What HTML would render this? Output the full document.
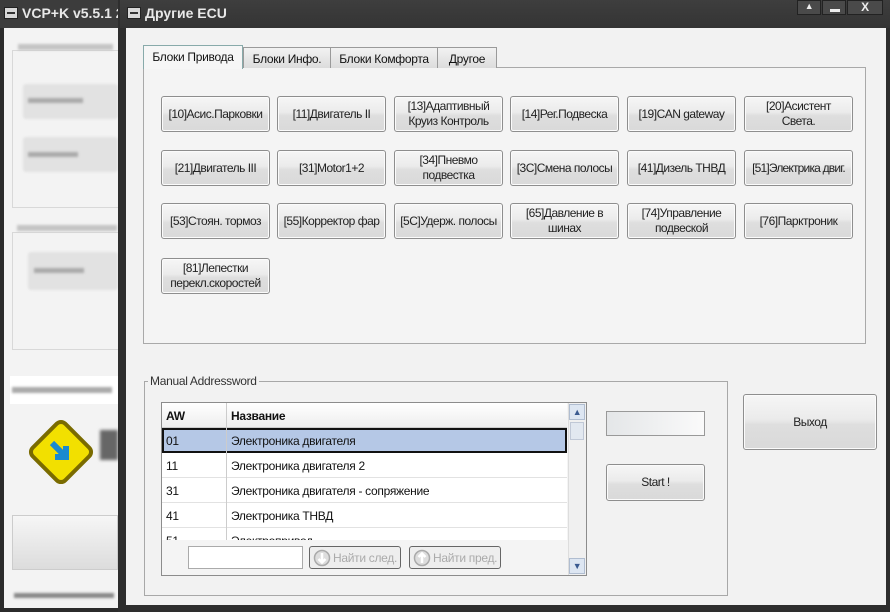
<!DOCTYPE html>
<html><head><meta charset="utf-8"><style>
*{box-sizing:border-box;margin:0;padding:0}
body{width:890px;height:612px;background:#2b2b2b;position:relative;overflow:hidden;font-family:"Liberation Sans",Arial,sans-serif;font-size:12px;color:#111;letter-spacing:-0.3px}
.a{position:absolute}
.title{color:#e8e8e8;font-weight:bold;font-size:14px;letter-spacing:0}
.sysbtn{background:#d8d8d8;border:1px solid #222;width:14px;height:12px}
.sysbtn:after{content:"";position:absolute;left:2px;top:4px;width:8px;height:2px;background:#333}
.btn{position:absolute;width:109px;height:36px;border:1px solid #8e8e8e;border-radius:3px;background:linear-gradient(#f6f6f6,#ebebeb 45%,#dedede 55%,#d9d9d9);display:flex;align-items:center;justify-content:center;text-align:center;font-size:12px;line-height:15px;color:#222;box-shadow:inset 0 0 0 1px #fbfbfb;white-space:nowrap;letter-spacing:-0.5px}
.tab{position:absolute;top:47px;height:21px;border:1px solid #9a9a9a;border-bottom:none;background:linear-gradient(#f2f2f2,#dcdcdc);font-size:12px;padding:4px 0 0;text-align:center}
.row{position:absolute;left:162px;width:405px;height:25px;border-bottom:1px solid #e2e2e2;background:#fff;font-size:12px}
.row span{position:absolute;top:6px}
.blur{background:#cfcfcf;filter:blur(1.2px)}
.sb{position:absolute;top:546px;width:92px;height:23px;border:1px solid #666;border-radius:3px;background:#eee;color:#aaa;font-size:12px;padding:4px 0 0 23px;white-space:nowrap}
.sb svg{position:absolute;left:3px;top:2px}
</style></head><body>
<!-- left window -->
<div class="a" style="left:0;top:0;width:118px;height:28px;background:#3c3c3c"></div>
<div class="a sysbtn" style="left:4px;top:7px"></div>
<div class="a title" style="left:22px;top:5px;white-space:nowrap">VCP+K v5.5.1 2</div>
<div class="a" style="left:4px;top:28px;width:114px;height:580px;background:#f3f3f3"></div>
<div class="a" style="left:12px;top:50px;width:106px;height:158px;border:1px solid #d8d8d8;border-right:none"></div>
<div class="a blur" style="left:18px;top:44px;width:95px;height:6px;background:#c4c4c4"></div>
<div class="a" style="left:23px;top:84px;width:95px;height:35px;background:#e2e2e2;border-radius:3px;filter:blur(1px)"></div>
<div class="a blur" style="left:28px;top:98px;width:55px;height:5px;background:#aaa"></div>
<div class="a" style="left:23px;top:137px;width:95px;height:35px;background:#e2e2e2;border-radius:3px;filter:blur(1px)"></div>
<div class="a blur" style="left:28px;top:152px;width:50px;height:5px;background:#aaa"></div>
<div class="a" style="left:12px;top:232px;width:106px;height:118px;border:1px solid #d8d8d8;border-right:none"></div>
<div class="a blur" style="left:17px;top:225px;width:100px;height:6px;background:#c4c4c4"></div>
<div class="a" style="left:28px;top:252px;width:90px;height:38px;background:#e2e2e2;border-radius:3px;filter:blur(1px)"></div>
<div class="a blur" style="left:34px;top:268px;width:50px;height:5px;background:#aaa"></div>
<div class="a" style="left:10px;top:376px;width:108px;height:28px;background:#fff"></div>
<div class="a blur" style="left:12px;top:387px;width:100px;height:6px;background:#aaa"></div>
<div class="a" style="left:36px;top:427px;width:50px;height:50px;background:#f2e000;border:4px solid #7a6b00;border-radius:8px;transform:rotate(45deg)"></div>
<svg class="a" style="left:46px;top:437px" width="30" height="30"><path d="M6 6 L20 20 M20 9 L20 20 L9 20" stroke="#1a8ad0" stroke-width="6" fill="none"/></svg>
<div class="a" style="left:100px;top:430px;width:18px;height:30px;background:#666;filter:blur(1.5px)"></div>
<div class="a" style="left:12px;top:515px;width:106px;height:55px;background:linear-gradient(#f6f6f6,#dcdcdc);border:1px solid #ccc"></div>
<div class="a blur" style="left:14px;top:593px;width:100px;height:5px;background:#888"></div>
<!-- main window -->
<div class="a" style="left:118px;top:0;width:772px;height:612px;background:#2e2e2e"></div>
<div class="a" style="left:120px;top:0;width:770px;height:28px;background:linear-gradient(#3e3e3e,#343434)"></div>
<div class="a sysbtn" style="left:127px;top:7px"></div>
<div class="a title" style="left:145px;top:5px">Другие ECU</div>
<div class="a" style="left:797px;top:0;width:24px;height:15px;background:#4a4a4a;border:1px solid #222;color:#eee;font-size:9px;text-align:center">▲</div>
<div class="a" style="left:822px;top:0;width:24px;height:15px;background:#4a4a4a;border:1px solid #222"><div class="a" style="left:7px;top:8px;width:10px;height:3px;background:#eee"></div></div>
<div class="a" style="left:847px;top:0;width:36px;height:15px;background:#4a4a4a;border:1px solid #222;color:#eee;font-size:12px;font-weight:bold;text-align:center;line-height:13px">X</div>
<div class="a" style="left:126px;top:28px;width:760px;height:577px;background:#f2f2f2"></div>
<!-- tabs -->
<div class="a" style="left:143px;top:67px;width:723px;height:277px;border:1px solid #a9a9a9;background:#f4f4f4"></div>
<div class="tab" style="left:243px;width:88px">Блоки Инфо.</div>
<div class="tab" style="left:330px;width:108px">Блоки Комфорта</div>
<div class="tab" style="left:437px;width:60px">Другое</div>
<div class="tab" style="left:143px;top:45px;width:100px;height:24px;background:#f6f6f6;border-color:#8aa">Блоки Привода</div>
<div class="btn" style="left:161px;top:96px">[10]Асис.Парковки</div>
<div class="btn" style="left:277px;top:96px">[11]Двигатель II</div>
<div class="btn" style="left:394px;top:96px">[13]Адаптивный<br>Круиз Контроль</div>
<div class="btn" style="left:510px;top:96px">[14]Рег.Подвеска</div>
<div class="btn" style="left:627px;top:96px">[19]CAN gateway</div>
<div class="btn" style="left:744px;top:96px">[20]Асистент<br>Света.</div>
<div class="btn" style="left:161px;top:150px">[21]Двигатель III</div>
<div class="btn" style="left:277px;top:150px">[31]Motor1+2</div>
<div class="btn" style="left:394px;top:150px">[34]Пневмо<br>подвестка</div>
<div class="btn" style="left:510px;top:150px">[3C]Смена полосы</div>
<div class="btn" style="left:627px;top:150px">[41]Дизель ТНВД</div>
<div class="btn" style="left:744px;top:150px;letter-spacing:-0.8px">[51]Электрика двиг.</div>
<div class="btn" style="left:161px;top:203px">[53]Стоян. тормоз</div>
<div class="btn" style="left:277px;top:203px">[55]Корректор фар</div>
<div class="btn" style="left:394px;top:203px">[5C]Удерж. полосы</div>
<div class="btn" style="left:510px;top:203px">[65]Давление в<br>шинах</div>
<div class="btn" style="left:627px;top:203px">[74]Управление<br>подвеской</div>
<div class="btn" style="left:744px;top:203px">[76]Парктроник</div>
<div class="btn" style="left:161px;top:258px">[81]Лепестки<br>перекл.скоростей</div>
<!-- group -->
<div class="a" style="left:144px;top:381px;width:584px;height:215px;border:1px solid #a8a8a8"></div>
<div class="a" style="left:148px;top:374px;background:#f2f2f2;padding:0 2px;font-size:12px;color:#333">Manual Addressword</div>
<div class="a" style="left:161px;top:402px;width:426px;height:174px;border:1px solid #8c8c8c;background:#f4f4f4"></div>
<div class="a" style="left:162px;top:403px;width:405px;height:25px;background:linear-gradient(#fff,#eee);border-bottom:1px solid #ccc;font-weight:bold"><span class="a" style="left:4px;top:6px">AW</span><span class="a" style="left:69px;top:6px">Название</span></div>
<div class="row" style="top:428px;background:#b5c8e6;border:2px solid #111"><span style="left:2px;top:4px">01</span><span style="left:67px;top:4px">Электроника двигателя</span></div>
<div class="row" style="top:453px"><span style="left:4px">11</span><span style="left:69px">Электроника двигателя 2</span></div>
<div class="row" style="top:478px"><span style="left:4px">31</span><span style="left:69px">Электроника двигателя - сопряжение</span></div>
<div class="row" style="top:503px"><span style="left:4px">41</span><span style="left:69px">Электроника ТНВД</span></div>
<div class="row" style="top:528px;height:12px;overflow:hidden;border:none"><span style="left:4px">51</span><span style="left:69px">Электропривод</span></div>
<div class="a" style="left:226px;top:403px;width:1px;height:137px;background:#ccc"></div>
<div class="a" style="left:162px;top:540px;width:405px;height:35px;background:#f4f4f4"></div>
<div class="a" style="left:188px;top:546px;width:115px;height:23px;background:#fff;border:1px solid #aaa"></div>
<div class="sb" style="left:309px"><svg width="18" height="18"><circle cx="9" cy="9" r="7.5" fill="#ddd" stroke="#aaa" stroke-width="1.5"/><path d="M9 4 V13 M5.5 10 L9 13.5 L12.5 10" stroke="#fff" stroke-width="2.5" fill="none"/></svg>Найти след.</div>
<div class="sb" style="left:409px"><svg width="18" height="18"><circle cx="9" cy="9" r="7.5" fill="#ddd" stroke="#aaa" stroke-width="1.5"/><path d="M9 14 V5 M5.5 8 L9 4.5 L12.5 8" stroke="#fff" stroke-width="2.5" fill="none"/></svg>Найти пред.</div>
<div class="a" style="left:568px;top:403px;width:18px;height:172px;background:#f0f0f0;border-left:1px solid #ddd"></div>
<div class="a" style="left:569px;top:404px;width:16px;height:16px;background:#dde6f2;border:1px solid #b0bdd0;color:#3a5a90;font-size:9px;text-align:center;line-height:14px">▲</div>
<div class="a" style="left:570px;top:422px;width:14px;height:18px;background:#e2e8f0;border:1px solid #c0c8d6"></div>
<div class="a" style="left:569px;top:558px;width:16px;height:16px;background:#dde6f2;border:1px solid #b0bdd0;color:#3a5a90;font-size:9px;text-align:center;line-height:14px">▼</div>
<div class="a" style="left:606px;top:411px;width:99px;height:25px;border:1px solid #999;background:linear-gradient(90deg,#e4e6e8,#fafafa)"></div>
<div class="btn" style="left:606px;top:464px;width:99px;height:37px">Start !</div>
<div class="btn" style="left:743px;top:394px;width:134px;height:56px">Выход</div>
</body></html>
